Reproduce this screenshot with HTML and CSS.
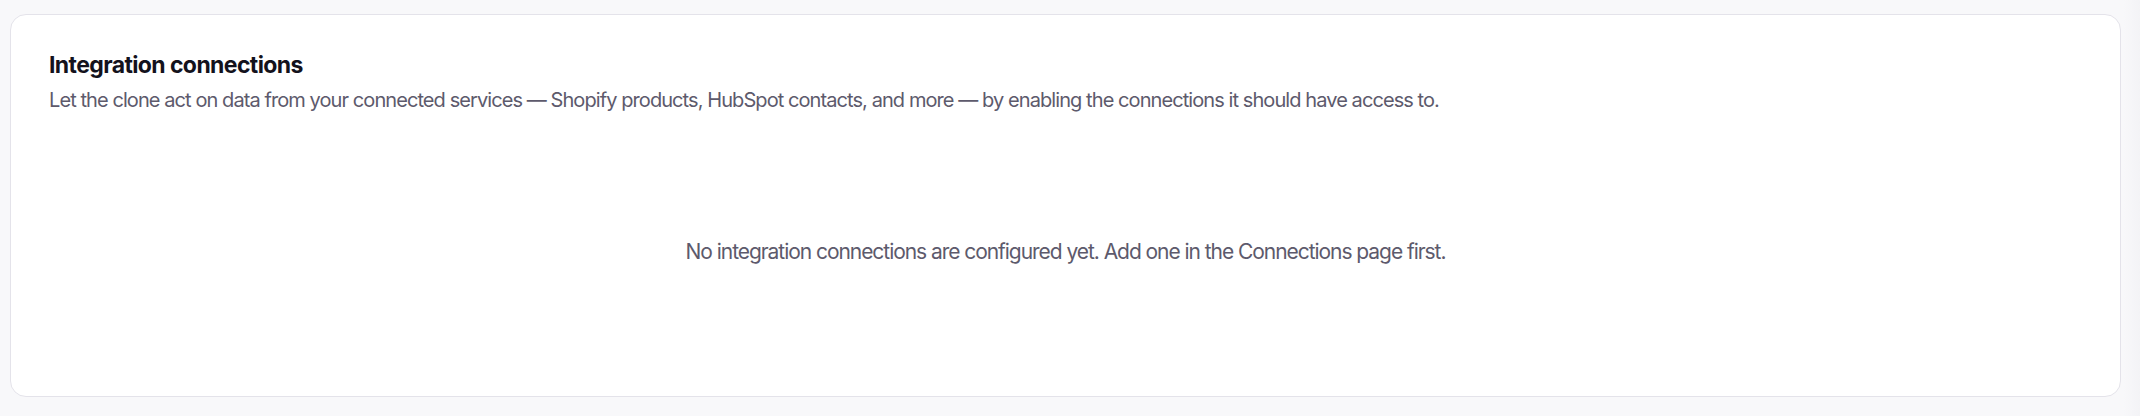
FILE: index.html
```html
<!DOCTYPE html>
<html lang="en">
<head>
<meta charset="utf-8">
<link rel="stylesheet" href="styles.css">
<title>Integration connections</title>
</head>
<body>
<div class="page">
  <section class="card">
    <h2 class="card-title">Integration connections</h2>
    <p class="card-desc">Let the clone act on data from your connected services — Shopify products, HubSpot contacts, and more — by enabling the connections it should have access to.</p>
    <div class="empty">No integration connections are configured yet. Add one in the Connections page first.</div>
  </section>
</div>
</body>
</html>
```
FILE: styles.css
```css
html, body {
  margin: 0;
  padding: 0;
}
body {
  background: #f8f8fa;
  font-family: Inter, "Noto Sans", sans-serif;
  width: 2140px;
  height: 416px;
  overflow: hidden;
}
.page {
  padding: 14px 19px 19px 10px;
  box-sizing: border-box;
  height: 416px;
  background: linear-gradient(to right, #f8f8fa 0, #f8f8fa 2124px, #f3f3f6 2140px);
}
.card {
  box-sizing: border-box;
  height: 383px;
  background: #ffffff;
  border: 1px solid #e4e3ea;
  border-radius: 16px;
  padding: 35px 38px 0 38px;
  display: flex;
  flex-direction: column;
}
.card-title {
  margin: 0;
  font-size: 23px;
  line-height: 30px;
  font-weight: 700;
  color: #13121c;
  letter-spacing: -0.6px;
}
.card-desc {
  margin: 6px 0 0 0;
  font-size: 20px;
  line-height: 28px;
  color: #5d5a6c;
  letter-spacing: -0.92px;
}
.empty {
  flex: 1;
  display: flex;
  align-items: center;
  justify-content: center;
  padding-bottom: 8px;
  font-size: 21px;
  letter-spacing: -1.05px;
  color: #5d5a6c;
}
```
